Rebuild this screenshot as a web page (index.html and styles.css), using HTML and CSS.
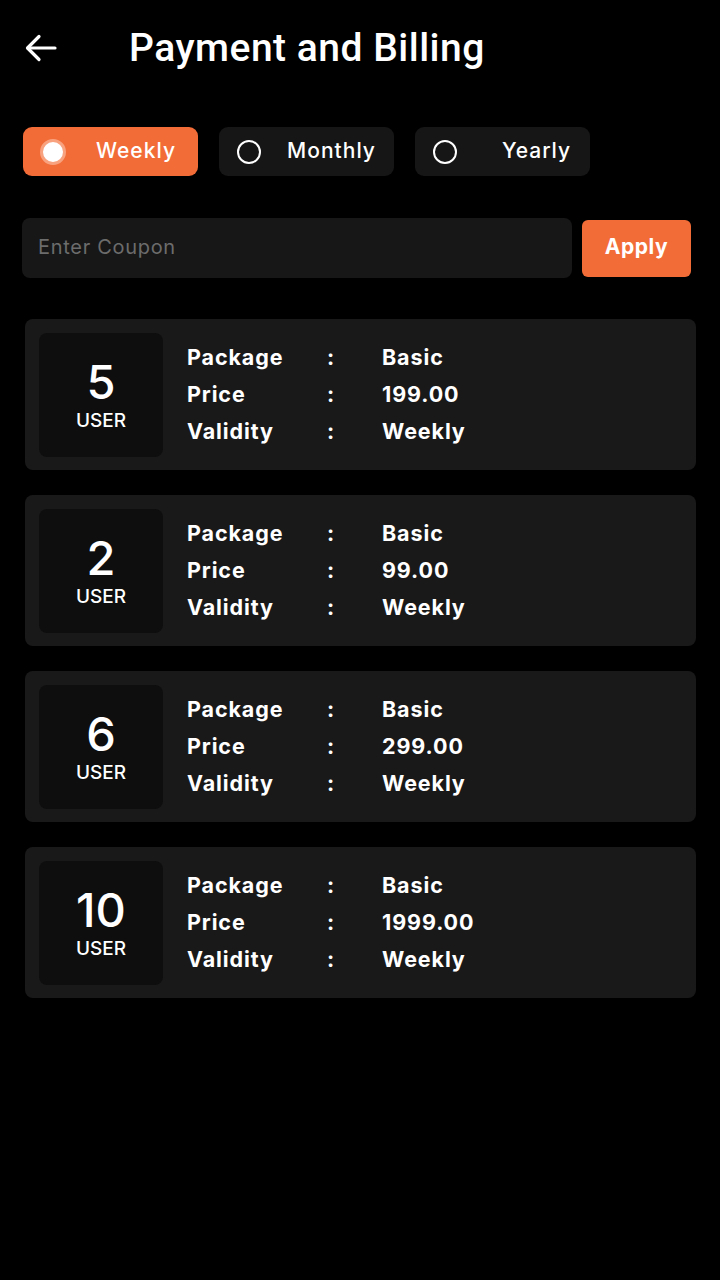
FILE: index.html
```html
<!DOCTYPE html>
<html>
<head>
<meta charset="utf-8">
<link rel="stylesheet" href="styles.css">
</head>
<body>
<div class="screen">
  <header class="topbar">
    <svg class="back" width="34" height="30" viewBox="0 0 34 30" fill="none" stroke="#fff" stroke-width="3.2" stroke-linecap="round" stroke-linejoin="round">
      <path d="M31 15H4"/>
      <path d="M15 3.5L3.5 15L15 26.5"/>
    </svg>
    <h1 class="title">Payment and Billing</h1>
  </header>

  <div class="tabs">
    <div class="tab active"><span class="radio"></span><span class="tab-label">Weekly</span></div>
    <div class="tab"><span class="radio"></span><span class="tab-label">Monthly</span></div>
    <div class="tab"><span class="radio"></span><span class="tab-label yearly">Yearly</span></div>
  </div>

  <div class="coupon-row">
    <div class="coupon">Enter Coupon</div>
    <div class="apply">Apply</div>
  </div>

  <div class="cards">
    <div class="card">
      <div class="users"><span class="num">5</span><span class="unit">USER</span></div>
      <div class="info">
        <span class="k">Package</span><span class="c">:</span><span class="v">Basic</span>
        <span class="k">Price</span><span class="c">:</span><span class="v">199.00</span>
        <span class="k">Validity</span><span class="c">:</span><span class="v">Weekly</span>
      </div>
    </div>
    <div class="card">
      <div class="users"><span class="num">2</span><span class="unit">USER</span></div>
      <div class="info">
        <span class="k">Package</span><span class="c">:</span><span class="v">Basic</span>
        <span class="k">Price</span><span class="c">:</span><span class="v">99.00</span>
        <span class="k">Validity</span><span class="c">:</span><span class="v">Weekly</span>
      </div>
    </div>
    <div class="card">
      <div class="users"><span class="num">6</span><span class="unit">USER</span></div>
      <div class="info">
        <span class="k">Package</span><span class="c">:</span><span class="v">Basic</span>
        <span class="k">Price</span><span class="c">:</span><span class="v">299.00</span>
        <span class="k">Validity</span><span class="c">:</span><span class="v">Weekly</span>
      </div>
    </div>
    <div class="card">
      <div class="users"><span class="num">10</span><span class="unit">USER</span></div>
      <div class="info">
        <span class="k">Package</span><span class="c">:</span><span class="v">Basic</span>
        <span class="k">Price</span><span class="c">:</span><span class="v">1999.00</span>
        <span class="k">Validity</span><span class="c">:</span><span class="v">Weekly</span>
      </div>
    </div>
  </div>
</div>
</body>
</html>
```

FILE: styles.css
```css
* { box-sizing: border-box; }
html, body {
  margin: 0;
  padding: 0;
  background: #000;
}
body {
  font-family: "Inter", "Noto Sans", sans-serif;
  color: #fff;
}
.screen {
  width: 720px;
  height: 1280px;
  background: #000;
}
.topbar {
  display: flex;
  align-items: center;
  height: 98px;
  padding-left: 24px;
  padding-bottom: 2px;
}
.back { display: block; }
.title {
  margin: 0 0 0 71px;
  font-family: "Roboto", sans-serif;
  font-weight: 500;
  font-size: 39px;
  letter-spacing: 0.5px;
}
.tabs {
  display: flex;
  gap: 21px;
  padding: 29px 0 0 23px;
}
.tab {
  width: 175px;
  height: 49px;
  border-radius: 9px;
  background: #161616;
  display: flex;
  align-items: center;
  padding-left: 18px;
}
.tab.active { background: #F26C38; }
.radio {
  width: 24px;
  height: 24px;
  border: 2px solid #fff;
  border-radius: 50%;
  flex: none;
}
.tab.active .radio {
  width: 26px;
  height: 26px;
  margin-left: -1px;
  border: 3px solid #F8A27F;
  background: #fff;
}
.tab-label {
  flex: 1;
  text-align: center;
  padding-left: 8px;
  padding-bottom: 2px;
  font-size: 21px;
  font-weight: 500;
  letter-spacing: 1px;
}
.tab-label.yearly { padding-left: 26px; }
.coupon-row {
  display: flex;
  align-items: center;
  gap: 10px;
  padding: 42px 0 0 22px;
}
.coupon {
  width: 550px;
  height: 60px;
  border-radius: 8px;
  background: #171717;
  display: flex;
  align-items: center;
  padding-left: 16px;
  padding-bottom: 3px;
  color: #6c6c6c;
  font-size: 20px;
  letter-spacing: 0.7px;
}
.apply {
  width: 109px;
  height: 57px;
  border-radius: 6px;
  background: #F26C38;
  display: flex;
  align-items: center;
  justify-content: center;
  padding-bottom: 3px;
  font-size: 21px;
  font-weight: 700;
  letter-spacing: 0.6px;
}
.cards {
  display: flex;
  flex-direction: column;
  gap: 25px;
  padding: 41px 0 0 25px;
}
.card {
  width: 671px;
  height: 151px;
  border-radius: 8px;
  background: #191919;
  display: flex;
  align-items: center;
  padding-left: 14px;
}
.users {
  width: 124px;
  height: 124px;
  border-radius: 8px;
  background: #0e0e0e;
  display: flex;
  flex-direction: column;
  align-items: center;
  justify-content: center;
  padding-top: 2px;
}
.num {
  font-size: 47px;
  font-weight: 500;
  line-height: 44px;
}
.unit {
  font-size: 19px;
  font-weight: 500;
  line-height: 22px;
  margin-top: 6px;
}
.info {
  display: grid;
  grid-template-columns: 139px 56px auto;
  margin-left: 24px;
  margin-top: -1px;
  font-size: 21.5px;
  font-weight: 700;
  line-height: 37px;
  letter-spacing: 0.9px;
}
.c { padding-left: 1px; }
```
